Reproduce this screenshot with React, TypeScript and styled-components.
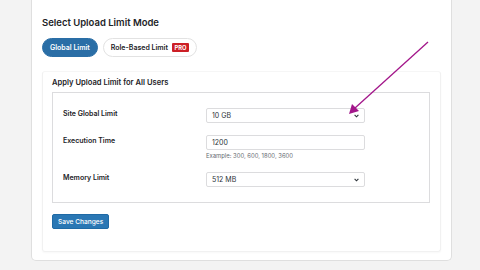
import styled, { createGlobalStyle } from 'styled-components'

const GlobalStyle = createGlobalStyle`
  html, body {
    margin: 0;
    padding: 0;
    background: #f3f3f3;
  }
  * {
    box-sizing: border-box;
  }
  body {
    font-family: Inter, "Liberation Sans", Arial, sans-serif;
    color: #1d2327;
  }
`

const Page = styled.div`
  position: relative;
  width: 480px;
  height: 270px;
  padding: 0 28px 0 31px;
  overflow: hidden;
`

const Card = styled.div`
  background: #fff;
  border: 1px solid #dfdfdf;
  border-top: none;
  border-radius: 0 0 5px 5px;
  padding: 17px 10px 8px 10px;
`

const Title = styled.h2`
  margin: 0 0 9px;
  font-size: 9.5px;
  line-height: 12px;
  font-weight: 600;
  color: #1d2327;
`

const ModeRow = styled.div`
  display: flex;
  gap: 5px;
  margin-bottom: 14px;
`

const ModeButton = styled.button<{ $active?: boolean }>`
  display: flex;
  align-items: center;
  gap: 4px;
  height: 19px;
  padding: 0 7px;
  border-radius: 10px;
  border: 1px solid ${({ $active }) => ($active ? '#2a6ea6' : '#e2e2e2')};
  background: ${({ $active }) => ($active ? '#2a6ea6' : '#fff')};
  color: ${({ $active }) => ($active ? '#fff' : '#1d2327')};
  font-family: inherit;
  font-size: 7px;
  font-weight: 600;
`

const ProBadge = styled.span`
  background: #cc1f26;
  color: #fff;
  font-size: 5.8px;
  font-weight: 700;
  line-height: 9px;
  padding: 0 2.5px;
  border-radius: 1px;
`

const Panel = styled.div`
  border: 1px solid #f1f1f1;
  border-top-color: #f6f6f6;
  border-radius: 3px;
  padding: 5px 10px 22px 9px;
  box-shadow: 0 1px 2px rgba(0, 0, 0, 0.03);
`

const PanelTitle = styled.h3`
  margin: 0 0 3px;
  font-size: 7.6px;
  line-height: 12px;
  font-weight: 600;
  color: #1d2327;
`

const FieldBox = styled.div`
  border: 1px solid #dcdcde;
  padding: 15px 10px 15px 10px;
  display: flex;
  flex-direction: column;
  gap: 12px;
`

const Row = styled.div`
  display: flex;
  align-items: flex-start;
`

const Label = styled.label`
  width: 143px;
  font-size: 7px;
  font-weight: 600;
  line-height: 12px;
  color: #1d2327;
`

const Control = styled.div`
  display: flex;
  flex-direction: column;
  gap: 2px;
`

const Field = styled.div`
  position: relative;
  display: flex;
  align-items: center;
  width: 159px;
  height: 15px;
  padding: 0 5px;
  border: 1px solid #dcdcde;
  border-radius: 2px;
  background: #fff;
  font-size: 7px;
  color: #2c3338;
`

const Chevron = styled.svg`
  position: absolute;
  right: 5px;
  top: 5px;
`

const Help = styled.p`
  margin: 0;
  font-size: 5.9px;
  line-height: 8px;
  color: #646970;
`

const SaveButton = styled.button`
  margin-top: 11px;
  height: 15px;
  padding: 0 5px;
  border: 1px solid #1f6aa5;
  border-radius: 2px;
  background: #2a77b4;
  color: #fff;
  font-family: inherit;
  font-size: 6.6px;
  font-weight: 500;
`

const Arrow = styled.svg`
  position: absolute;
  left: 0;
  top: 0;
  pointer-events: none;
`

function Select({ value }: { value: string }) {
  return (
    <Field>
      {value}
      <Chevron width="5" height="4" viewBox="0 0 5 4">
        <path d="M0.6 0.8 L2.5 2.8 L4.4 0.8" fill="none" stroke="#2c3338" strokeWidth="1.1" />
      </Chevron>
    </Field>
  )
}

export default function App() {
  return (
    <>
      <GlobalStyle />
      <Page>
        <Card>
          <Title>Select Upload Limit Mode</Title>
          <ModeRow>
            <ModeButton $active>Global Limit</ModeButton>
            <ModeButton>
              Role-Based Limit <ProBadge>PRO</ProBadge>
            </ModeButton>
          </ModeRow>
          <Panel>
            <PanelTitle>Apply Upload Limit for All Users</PanelTitle>
            <FieldBox>
              <Row>
                <Label>Site Global Limit</Label>
                <Control>
                  <Select value="10 GB" />
                </Control>
              </Row>
              <Row>
                <Label>Execution Time</Label>
                <Control>
                  <Field>1200</Field>
                  <Help>Example: 300, 600, 1800, 3600</Help>
                </Control>
              </Row>
              <Row>
                <Label>Memory Limit</Label>
                <Control>
                  <Select value="512 MB" />
                </Control>
              </Row>
            </FieldBox>
            <SaveButton>Save Changes</SaveButton>
          </Panel>
        </Card>
        <Arrow width="480" height="270" viewBox="0 0 480 270">
          <line x1="428" y1="42" x2="355" y2="108" stroke="#a3168a" strokeWidth="1.3" />
          <polygon points="349,114 352,104 359,111" fill="#a3168a" />
        </Arrow>
      </Page>
    </>
  )
}
